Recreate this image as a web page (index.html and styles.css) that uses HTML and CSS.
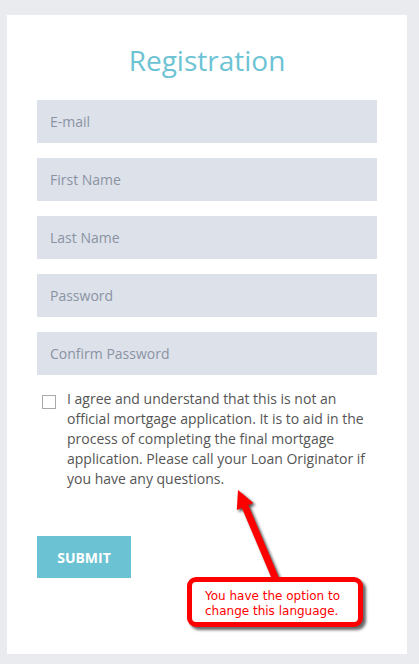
FILE: index.html
```html
<!DOCTYPE html>
<html lang="en">
<head>
  <meta charset="UTF-8" />
  <title>Registration</title>
  <link rel="stylesheet" href="styles.css">
</head>
<body>

  <div class="cartao">
    <h1 class="titulo">Registration</h1>

    <form class="formulario">
      <input type="email" class="campo" placeholder="E-mail" />
      <input type="text" class="campo" placeholder="First Name" />
      <input type="text" class="campo" placeholder="Last Name" />
      <input type="password" class="campo" placeholder="Password" />
      <input type="password" class="campo" placeholder="Confirm Password" />

      <label class="aceite">
        <span class="caixa"></span>
        <span class="aceite-texto">I agree and understand that this is not an official mortgage application. It is to aid in the process of completing the final mortgage application. Please call your Loan Originator if you have any questions.</span>
      </label>

      <button type="button" class="enviar">SUBMIT</button>
    </form>

    <!-- anotação do print -->
    <svg class="seta" viewBox="225 480 70 110" width="70" height="110">
      <polygon points="238,490 253.4,502.9 248.3,505.1 280.2,580.6 273.8,583.4 241.9,507.9 236.8,510.1" fill="#ff0000" />
    </svg>
    <div class="balao">You have the option to change this language.</div>
  </div>

</body>
</html>
```

FILE: styles.css
```css
body {
  margin: 0;
  background-color: #eaebef;
  padding: 15px 12px 10px 7px;
  font-family: "Open Sans", Arial, sans-serif;
}

.cartao {
  position: relative;
  background-color: #fff;
  width: 400px;
  height: 639px;
  box-sizing: border-box;
  padding: 25px 30px 0 30px;
}

.titulo {
  margin: 0 0 20px 0;
  font-size: 28px;
  line-height: 40px;
  font-weight: 400;
  text-align: center;
  color: #6cc3d4;
}

.formulario {
  display: flex;
  flex-direction: column;
  gap: 15px;
}

.campo {
  height: 43px;
  box-sizing: border-box;
  border: none;
  background-color: #dde1ea;
  padding: 0 13px;
  font-family: "Open Sans", Arial, sans-serif;
  font-size: 14px;
  color: #555;
}

.campo::placeholder {
  color: #8a93a3;
}

.aceite {
  display: flex;
  gap: 11px;
  padding-left: 5px;
  margin-top: -1px;
  font-size: 14px;
  line-height: 20px;
  color: #555;
}

.caixa {
  flex: none;
  width: 14px;
  height: 14px;
  box-sizing: border-box;
  border: 1px solid #aaa;
  background-color: #fff;
  margin-top: 6px;
}

.enviar {
  align-self: flex-start;
  margin-top: 32px;
  width: 94px;
  height: 42px;
  border: none;
  background-color: #6bc2d2;
  color: #fff;
  font-family: "Open Sans", Arial, sans-serif;
  font-weight: 700;
  font-size: 14px;
  cursor: pointer;
}

.seta {
  position: absolute;
  left: 218px;
  top: 465px;
  overflow: visible;
  filter: drop-shadow(2px 2px 1.5px rgba(0, 0, 0, 0.7));
}

.balao {
  position: absolute;
  left: 180px;
  top: 562px;
  width: 176px;
  height: 50px;
  box-sizing: border-box;
  border: 5px solid #ff0000;
  border-radius: 9px;
  background-color: #fff;
  box-shadow: 3px 3px 3px rgba(0, 0, 0, 0.6);
  padding: 7px 6px 0 13px;
  font-family: "DejaVu Sans", Verdana, sans-serif;
  font-size: 12px;
  line-height: 15px;
  color: #ff0000;
}
```
